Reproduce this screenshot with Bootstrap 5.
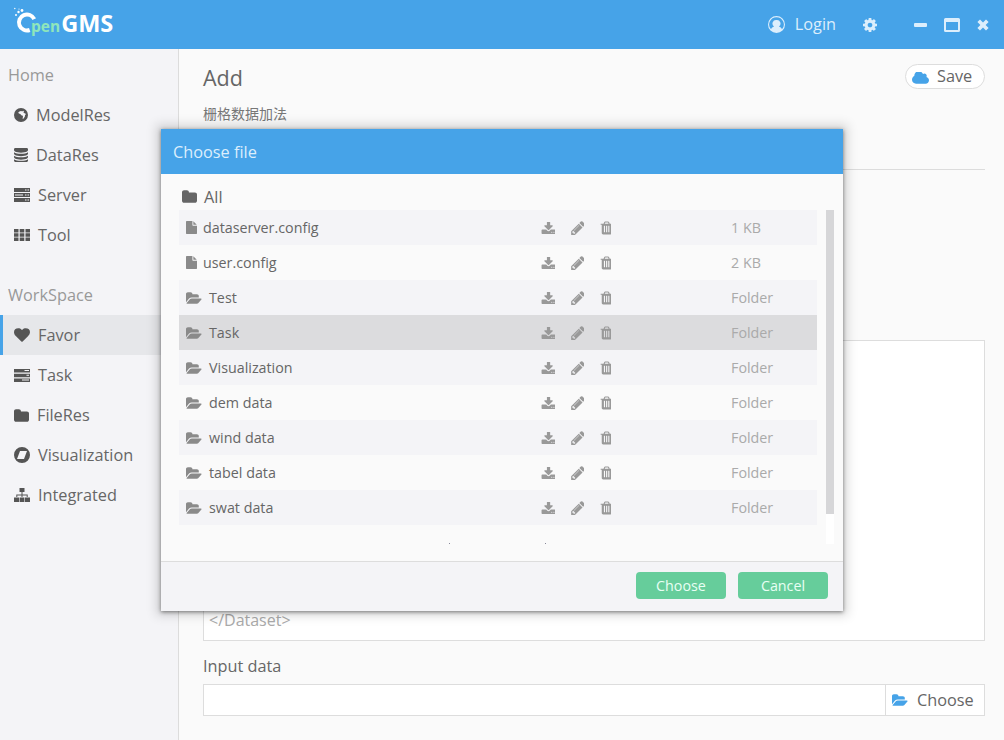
<!DOCTYPE html>
<html lang="en">
<head>
    <meta charset="UTF-8">
    <meta name="viewport" content="width=device-width, initial-scale=1.0">
    <title>OpenGMS</title>
    <link href="https://cdn.jsdelivr.net/npm/bootstrap@5.3.0/dist/css/bootstrap.min.css" rel="stylesheet">
    <style>
        html, body { height: 100%; overflow: hidden; }
        body { font-family: "Open Sans", "Noto Sans CJK SC", sans-serif; font-size: 16.3px; color: #666; background: #fafafa; }
        .app-shell { position: relative; width: 1004px; height: 740px; }
        .top-bar { height: 49px; padding: 0 15px 0 14px; background: #46a3e8; color: #dceefc; flex-wrap: nowrap; }
        .top-bar svg { fill: #dceefc; display: block; }
        .top-bar .logo-o { fill: #fff; margin-right: -6px; margin-top: -1px; }
        .logo-text { line-height: 49px; padding-top: 1px; font-weight: 700; white-space: nowrap; }
        .logo-pen { font-size: 15.500px; color: #8fe6bb; font-weight: 700; }
        .logo-gms { font-size: 23.500px; color: #fff; margin-left: 1px; }
        .login-txt { margin: 0 27px 0 10px; }
        .win-gear { margin-right: 37px; }
        .win-min { margin-right: 17px; }
        .win-max { margin-right: 17px; }
        .app-body { height: 691px; }
        .side-nav { width: 179px; flex: none; background: #f4f4f7; border-right: 1px solid #dcdcdc; padding-top: 6px; }
        .side-head { height: 40px; line-height: 40px; padding-left: 8px; color: #999; }
        .side-head.second { margin-top: 20px; }
        .side-link { height: 40px; padding: 0 0 0 14px; color: #666; display: flex; align-items: center; border-left: 0; }
        .side-link svg { fill: #555; margin-right: 8px; flex: none; }
        .side-link.picked { background: #e6e7ea; color: #666; padding-left: 11px; border-left: 3px solid #46a3e8; }
        .work-area { flex: 1; padding: 15px 19px 0 24px; min-width: 0; }
        .add-title { font-size: 21.500px; line-height: 28px; margin: 0; font-weight: 400; }
        .save-btn { height: 25px; width: 80px; padding: 0 0 0 6px; border-radius: 13px; background: #fff; border: 1px solid #ddd; color: #666; font-size: 16.300px; line-height: 21px; text-align: left; }
        .save-btn svg { fill: #46a3e8; margin-right: 8px; vertical-align: -2px; }
        .add-sub { font-size: 14px; line-height: 21px; margin: 11px 0 0; color: #777; }
        .rule-line { height: 1px; background: #dcdcdc; margin-top: 45px; }
        .xml-box { display: block; width: 782px; height: 301px; margin-top: 170px; padding: 3px 5px; border: 1px solid #ddd; border-radius: 0; background: #fff; color: #aaa; font-size: 16px; line-height: 24px; resize: none; overflow: hidden; }
        .input-cap { line-height: 24px; margin: 13px 0 6px; }
        .pick-group { height: 32px; width: 782px; }
        .pick-group .form-control { border-radius: 0; border-color: #ddd; height: 32px; background: #fff; }
        .pick-group .input-group-text { border-radius: 0; border-color: #ddd; background: #fff; color: #666; width: 100px; padding: 0 0 0 6px; font-size: 16.300px; }
        .pick-group svg { fill: #46a3e8; margin-right: 9px; }
        .file-dialog { position: absolute; left: 161px; top: 129px; width: 682px; height: 482px; border: 0; border-radius: 0; background: #fafafa; box-shadow: 0 1px 4px rgba(0,0,0,.5), 0 0 10px 5px rgba(0,0,0,.13); }
        .file-dialog .modal-header { height: 45px; padding: 2px 12px 0; background: #46a3e8; color: #dceefc; border: 0; border-radius: 0; }
        .file-dialog .modal-body { padding: 0; position: relative; flex: none; height: 387px; }
        .all-row { height: 36px; padding: 9px 0 0 21px; font-size: 16.300px; line-height: 28px; display: flex; align-items: center; }
        .all-row svg { fill: #666; margin-right: 7px; }
        .list-wrap { margin-left: 18px; width: 656px; height: 334px; position: relative; }
        .file-rows { width: 638px; }
        .file-row { height: 35px; display: flex; align-items: center; font-size: 14.300px; color: #666; background: #fafafa; }
        .file-row:nth-child(odd) { background: #f4f4f7; }
        .file-row.hover-row { background: #dcdcde; }
        .row-name { width: 362px; padding-left: 7px; display: flex; align-items: center; }
        .row-name svg { fill: #8a8a8a; margin-right: 7px; }
        .row-name svg.is-file { margin-right: 6px; }
        .row-tools { display: flex; gap: 15px; align-items: center; }
        .row-tools svg { fill: #999; display: block; }
        .row-size { margin-left: auto; width: 86px; color: #aaa; }
        .scroll-track { position: absolute; left: 647px; top: 0; width: 8px; height: 334px; background: #fff; }
        .scroll-thumb { width: 8px; height: 304px; background: #d6d6d8; }
        .stray-dot { position: absolute; top: 333px; width: 1px; height: 1px; background: #889; }
        .file-dialog .modal-footer { height: 50px; padding: 0 15px 2px 0; gap: 12px; background: #f4f4f7; border-top: 1px solid #ddd; border-radius: 0; flex: none; }
        .green-btn { width: 90px; height: 27px; margin: 0; padding: 0; background: #66cd9b; border: 0; border-radius: 4px; color: #e8fff4; font-size: 14.300px; line-height: 26px; }
    </style>
</head>
<body>
    <svg class="d-none" xmlns="http://www.w3.org/2000/svg">
        <symbol id="i-heart" viewBox="0 128 1792 1536"><path d="M896 1664q-26 0-44-18l-624-602q-10-8-27.500-26t-55.500-65.500-68-97.500-53.500-121-23.500-138q0-220 127-344t351-124q62 0 126.500 21.500t120 58 95.500 68.500 76 68q36-36 76-68t95.500-68.500 120-58 126.500-21.500q224 0 351 124t127 344q0 221-229 450l-623 600q-18 18-44 18z"/></symbol>
        <symbol id="i-folder" viewBox="0 128 1664 1408"><path d="M1664 608v704q0 92-66 158t-158 66h-1216q-92 0-158-66t-66-158v-960q0-92 66-158t158-66h320q92 0 158 66t66 158v32h672q92 0 158 66t66 158z"/></symbol>
        <symbol id="i-open" viewBox="0 128 1920 1408"><path d="M1879 952q0 31-31 66l-336 396q-43 51-120.500 86.500t-143.500 35.500h-1088q-34 0-60.500-13t-26.500-43q0-31 31-66l336-396q43-51 120.500-86.500t143.500-35.500h1088q34 0 60.500 13t26.500 43zm-343-344v160h-832q-94 0-197 47.500t-164 119.500l-337 396-5 6q0-4-.5-12.500t-.5-12.500v-960q0-92 66-158t158-66h320q92 0 158 66t66 158v32h544q92 0 158 66t66 158z"/></symbol>
        <symbol id="i-pencil" viewBox="0 128 1536 1536"><path d="M491 1536l91-91-235-235-91 91v107h128v128h107zm523-928q0-22-22-22-10 0-17 7l-542 542q-7 7-7 17 0 22 22 22 10 0 17-7l542-542q7-7 7-17zm-54-192l416 416-832 832h-416v-416zm683 96q0 53-37 90l-166 166-416-416 166-165q36-38 90-38 53 0 91 38l235 234q37 39 37 91z"/></symbol>
        <symbol id="i-trash" viewBox="0 128 1408 1536"><path d="M704 1376v-704q0-14-9-23t-23-9h-64q-14 0-23 9t-9 23v704q0 14 9 23t23 9h64q14 0 23-9t9-23zm256 0v-704q0-14-9-23t-23-9h-64q-14 0-23 9t-9 23v704q0 14 9 23t23 9h64q14 0 23-9t9-23zm256 0v-704q0-14-9-23t-23-9h-64q-14 0-23 9t-9 23v704q0 14 9 23t23 9h64q14 0 23-9t9-23zm-544-992h448l-48-117q-7-9-17-11h-317q-10 2-17 11zm928 32v64q0 14-9 23t-23 9h-96v948q0 83-47 143.500t-113 60.500h-832q-66 0-113-58.500t-47-141.500v-952h-96q-14 0-23-9t-9-23v-64q0-14 9-23t23-9h309l70-167q15-37 54-63t79-26h320q40 0 79 26t54 63l70 167h309q14 0 23 9t9 23z"/></symbol>
        <symbol id="i-down" viewBox="0 128 1664 1408"><path d="M1344 1344q0-26-19-45t-45-19-45 19-19 45 19 45 45 19 45-19 19-45zm256 0q0-26-19-45t-45-19-45 19-19 45 19 45 45 19 45-19 19-45zm128-224v320q0 40-28 68t-68 28h-1472q-40 0-68-28t-28-68v-320q0-40 28-68t68-28h465l135 136q58 56 136 56t136-56l136-136h464q40 0 68 28t28 68zm-325-569q17 41-14 70l-448 448q-18 19-45 19t-45-19l-448-448q-31-29-14-70 17-39 59-39h256v-448q0-26 19-45t45-19h256q26 0 45 19t19 45v448h256q42 0 59 39z"/></symbol>
        <symbol id="i-file" viewBox="0 0 1536 1792"><path d="M1024 512v-472q22 14 36 28l408 408q14 14 28 36h-472zm-128 32q0 40 28 68t68 28h544v1056q0 40-28 68t-68 28h-1344q-40 0-68-28t-28-68v-1600q0-40 28-68t68-28h800v544z"/></symbol>
        <symbol id="i-cloud" viewBox="0 256 1920 1280"><path d="M1920 1152q0 159-112.500 271.500t-271.500 112.500h-1088q-185 0-316.500-131.500t-131.500-316.500q0-132 71-241.500t187-163.500q-2-28-2-43 0-212 150-362t362-150q158 0 286.500 88t187.500 230q70-62 166-62 106 0 181 75t75 181q0 75-41 138 129 30 213 134.500t84 239.500z"/></symbol>
        <symbol id="i-cog" viewBox="0 128 1536 1536"><path d="M1024 896q0-106-75-181t-181-75-181 75-75 181 75 181 181 75 181-75 75-181zm512-109v222q0 12-8 23t-20 13l-185 28q-19 54-39 91 35 50 107 138 10 12 10 25t-9 23q-27 37-99 108t-94 71q-12 0-26-9l-138-108q-44 23-91 38-16 136-29 186-7 28-36 28h-222q-14 0-24.500-8.500t-11.500-21.500l-28-184q-49-16-90-37l-141 107q-10 9-25 9-14 0-25-11-126-114-165-168-7-10-7-23 0-12 8-23 15-21 51-66.500t54-70.500q-27-50-41-99l-183-27q-13-2-21-12.500t-8-23.500v-222q0-12 8-23t19-13l186-28q14-46 39-92-40-57-107-138-10-12-10-24 0-10 9-23 26-36 98.500-107.500t94.500-71.500q13 0 26 10l138 107q44-23 91-38 16-136 29-186 7-28 36-28h222q14 0 24.500 8.500t11.500 21.500l28 184q49 16 90 37l142-107q9-9 24-9 13 0 25 10 129 119 165 170 7 8 7 22 0 12-8 23-15 21-51 66.500t-54 70.500q26 50 41 98l183 28q13 2 21 12.500t8 23.500z"/></symbol>
        <symbol id="i-db" viewBox="0 128 1536 1536"><path d="M768 768q237 0 443-43t325-127v170q0 69-103 128t-280 93.500-385 34.500-385-34.500-280-93.500-103-128v-170q119 84 325 127t443 43zm0 768q237 0 443-43t325-127v170q0 69-103 128t-280 93.500-385 34.500-385-34.500-280-93.500-103-128v-170q119 84 325 127t443 43zm0-384q237 0 443-43t325-127v170q0 69-103 128t-280 93.500-385 34.500-385-34.500-280-93.500-103-128v-170q119 84 325 127t443 43zm0-1152q208 0 385 34.500t280 93.500 103 128v128q0 69-103 128t-280 93.500-385 34.500-385-34.500-280-93.500-103-128v-128q0-69 103-128t280-93.500 385-34.500z"/></symbol>
        <symbol id="i-globe" viewBox="1 1 14 14"><path fill-rule="evenodd" d="M8 1a7 7 0 1 1 0 14A7 7 0 0 1 8 1zM7 4.200 5.300 5.200l.5 1.300 1.500.4 1 1.300 1.500.5.200 1.400-.6 1.400 1 .2 1.400-2 .3-1.600.7-.7-.4-1-1.500-.5-.5-1 .7-.6-1-.6-1 .8-.9-.6z"/></symbol>
        <symbol id="i-server" viewBox="0 0 16 14"><path fill-rule="evenodd" d="M0 0h16v4H0zm11 1.500v1h1.500v-1zm2.500 0v1H15v-1zM0 5h16v4H0zm1 1.500v1h8v-1zm10 0v1h1.500v-1zm2.500 0v1H15v-1zM0 10h16v4H0zm11 1.500v1h1.500v-1zm2.500 0v1H15v-1z"/></symbol>
        <symbol id="i-grid" viewBox="0 0 16 12"><path d="M0 0h4.500v3.500H0zm5.700 0h4.600v3.500H5.700zm5.800 0H16v3.500h-4.500zM0 4.300h4.500v3.400H0zm5.700 0h4.600v3.400H5.700zm5.800 0H16v3.400h-4.500zM0 8.500h4.500V12H0zm5.700 0h4.600V12H5.700zm5.800 0H16V12h-4.500z"/></symbol>
        <symbol id="i-tasks" viewBox="0 0 16 13"><path fill-rule="evenodd" d="M0 0h16v3.500H0zm10.500 1v1H15V1zM0 4.700h16v3.500H0zm12.500 1.100v1H15v-1zM0 9.500h16V13H0zm8 1.100v1h7v-1z"/></symbol>
        <symbol id="i-compass" viewBox="0 0 16 16"><path fill-rule="evenodd" d="M8 0a8 8 0 1 1 0 16A8 8 0 0 1 8 0zM6 4 3 12h7l3-8z"/></symbol>
        <symbol id="i-sitemap" viewBox="0 0 16 14"><path d="M5.500 0h5v4h-5zM7.500 4h1v2.500h5.200V9h-1V7.500H8.500V9h-1V7.500H3.300V9h-1V6.500h5.200zM0 9.500h5V14H0zm5.600 0h4.800V14H5.600zm5.400 0h5V14h-5z"/></symbol>
        <symbol id="i-user" viewBox="0 0 18 18"><path fill-rule="evenodd" d="M9 0a9 9 0 1 1 0 18A9 9 0 0 1 9 0zm0 1.300a7.700 7.700 0 0 0-5.800 12.800c.6-1.600 1.700-2.600 3.200-3A3.800 3.800 0 0 1 9 4.200a3.800 3.800 0 0 1 2.600 6.900c1.500.4 2.600 1.400 3.200 3A7.700 7.700 0 0 0 9 1.300z"/></symbol>
        <symbol id="i-close" viewBox="0 0 12 12"><path d="M3 .4 6 3.400 9 .4 11.600 3 8.600 6l3 3L9 11.600l-3-3-3 3L.4 9l3-3-3-3z"/></symbol>
        <symbol id="i-max" viewBox="0 0 16 14"><path fill-rule="evenodd" d="M1.500 0h13A1.500 1.500 0 0 1 16 1.500v11a1.500 1.500 0 0 1-1.500 1.500h-13A1.500 1.500 0 0 1 0 12.500v-11A1.500 1.500 0 0 1 1.500 0zM2 4v8h12V4z"/></symbol>
    </svg>

    <div class="app-shell">
        <nav class="navbar top-bar justify-content-start">
            <svg class="logo-o" width="23" height="34" viewBox="0 0 23 34" xmlns="http://www.w3.org/2000/svg">
                <circle cx="0.800" cy="1.500" r="0.700"/><circle cx="2" cy="8" r="1"/><circle cx="4.500" cy="5" r="1.200"/><circle cx="8" cy="3.500" r="1.400"/><circle cx="5" cy="2" r="0.600"/>
                <path d="M20.250 12.100A8 8 0 1 0 15.700 23" fill="none" stroke="#fff" stroke-width="4"/>
            </svg>
            <div class="logo-text"><span class="logo-pen">pen</span><span class="logo-gms">GMS</span></div>
            <div class="ms-auto d-flex align-items-center">
                <svg width="17" height="17"><use href="#i-user"/></svg>
                <span class="login-txt">Login</span>
                <svg class="win-gear" width="14" height="14"><use href="#i-cog"/></svg>
                <svg class="win-min" width="13" height="4" viewBox="0 0 13 4"><rect width="13" height="4" rx="1"/></svg>
                <svg class="win-max" width="16" height="14"><use href="#i-max"/></svg>
                <svg width="12" height="12"><use href="#i-close"/></svg>
            </div>
        </nav>

        <div class="app-body d-flex">
            <aside class="side-nav">
                <div class="side-head">Home</div>
                <nav class="nav flex-column">
                    <a class="nav-link side-link" href="#"><svg width="14" height="14"><use href="#i-globe"/></svg>ModelRes</a>
                    <a class="nav-link side-link" href="#"><svg width="14" height="14"><use href="#i-db"/></svg>DataRes</a>
                    <a class="nav-link side-link" href="#"><svg width="16" height="14"><use href="#i-server"/></svg>Server</a>
                    <a class="nav-link side-link" href="#"><svg width="16" height="12"><use href="#i-grid"/></svg>Tool</a>
                </nav>
                <div class="side-head second">WorkSpace</div>
                <nav class="nav flex-column">
                    <a class="nav-link side-link picked" href="#"><svg width="16" height="14"><use href="#i-heart"/></svg>Favor</a>
                    <a class="nav-link side-link" href="#"><svg width="16" height="13"><use href="#i-tasks"/></svg>Task</a>
                    <a class="nav-link side-link" href="#"><svg width="15" height="13"><use href="#i-folder"/></svg>FileRes</a>
                    <a class="nav-link side-link" href="#"><svg width="16" height="16"><use href="#i-compass"/></svg>Visualization</a>
                    <a class="nav-link side-link" href="#"><svg width="16" height="14"><use href="#i-sitemap"/></svg>Integrated</a>
                </nav>
            </aside>

            <main class="work-area">
                <div class="d-flex justify-content-between align-items-start">
                    <h1 class="add-title">Add</h1>
                    <button class="btn save-btn" type="button"><svg width="17" height="12"><use href="#i-cloud"/></svg>Save</button>
                </div>
                <p class="add-sub">栅格数据加法</p>
                <div class="rule-line"></div>
                <textarea class="xml-box" readonly>&lt;Dataset&gt;










&lt;/Dataset&gt;</textarea>
                <div class="input-cap">Input data</div>
                <div class="input-group pick-group">
                    <input type="text" class="form-control">
                    <span class="input-group-text"><svg width="16" height="12"><use href="#i-open"/></svg>Choose</span>
                </div>
            </main>
        </div>

        <div class="modal-content file-dialog">
            <div class="modal-header">Choose file</div>
            <div class="modal-body">
                <div class="all-row"><svg width="15" height="13"><use href="#i-folder"/></svg>All</div>
                <div class="list-wrap">
                    <div class="file-rows" id="fileRows"></div>
                    <div class="scroll-track"><div class="scroll-thumb"></div></div>
                    <span class="stray-dot" style="left:270px"></span>
                    <span class="stray-dot" style="left:366px"></span>
                </div>
            </div>
            <div class="modal-footer">
                <button class="btn green-btn" type="button">Choose</button>
                <button class="btn green-btn" type="button">Cancel</button>
            </div>
        </div>
    </div>

    <script>
        let fileList = [
            { nama: "dataserver.config", ukuran: "1 KB" },
            { nama: "user.config", ukuran: "2 KB" },
            { nama: "Test" }, { nama: "Task", aktif: true }, { nama: "Visualization" },
            { nama: "dem data" }, { nama: "wind data" }, { nama: "tabel data" }, { nama: "swat data" }
        ];
        let rows = document.getElementById("fileRows");
        fileList.forEach(item => {
            let ikon = item.ukuran
                ? '<svg class="is-file" width="11" height="13"><use href="#i-file"/></svg>'
                : '<svg width="16" height="12"><use href="#i-open"/></svg>';
            rows.innerHTML += `
                <div class="file-row ${item.aktif ? "hover-row" : ""}">
                    <div class="row-name">${ikon}<span>${item.nama}</span></div>
                    <div class="row-tools">
                        <svg width="14" height="12"><use href="#i-down"/></svg>
                        <svg width="14" height="14"><use href="#i-pencil"/></svg>
                        <svg width="12" height="14"><use href="#i-trash"/></svg>
                    </div>
                    <div class="row-size">${item.ukuran || "Folder"}</div>
                </div>`;
        });
    </script>
    <script src="https://cdn.jsdelivr.net/npm/bootstrap@5.3.0/dist/js/bootstrap.bundle.min.js"></script>
</body>
</html>
